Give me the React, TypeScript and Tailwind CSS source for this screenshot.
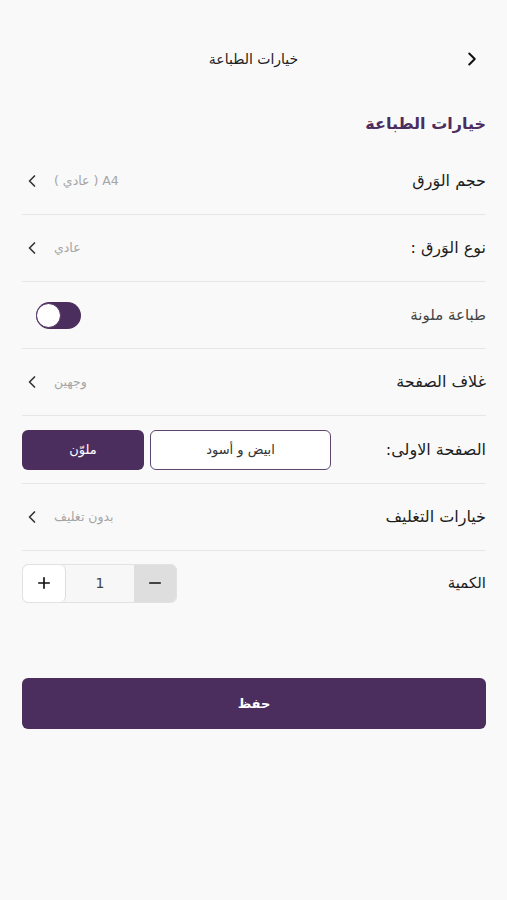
import { ChevronLeft, ChevronRight, Plus, Minus } from 'lucide-react';

const font = "font-['DejaVu_Sans',sans-serif]";

function NavRow({ label, value }: { label: string; value: string }) {
  return (
    <div className="flex items-center justify-between h-[67px] border-b border-[#e6e6e6]">
      <span className="text-[16px] text-[#1d1d1d]">{label}</span>
      <div className="flex items-center gap-[12px] text-[#a5a5a5]">
        <span className="text-[12.5px]">{value}</span>
        <ChevronLeft className="w-[20px] h-[20px] text-[#333]" strokeWidth={2} />
      </div>
    </div>
  );
}

export default function App() {
  return (
    <div dir="rtl" className={`${font} w-[507px] h-[900px] bg-[#f9f9f9] flex flex-col`}>
      {/* Header */}
      <div className="relative flex items-center justify-center h-[60px] mt-[29px] text-[14px] text-[#222]">
        <span>خيارات الطباعة</span>
        <ChevronRight className="absolute right-[24px] w-[22px] h-[22px] text-[#111]" strokeWidth={2.2} />
      </div>

      <div className="pr-[21px] pl-[22px]">
        <h2 className="text-[16px] font-bold text-[#4b2d5e] mt-[23px] mb-[12px]">خيارات الطباعة</h2>

        <NavRow label="حجم الوَرق" value="A4 ( عادي )" />
        <NavRow label="نوع الوَرق :" value="عادي" />

        <div className="flex items-center justify-between h-[67px] border-b border-[#e6e6e6]">
          <span className="text-[15px] text-[#444]">طباعة ملونة</span>
          <div className="w-[45px] h-[27px] rounded-full bg-[#4b2d5e] flex items-center justify-end ml-[14px]">
            <div className="w-[25px] h-[25px] rounded-full bg-white border border-[#4b2d5e]" />
          </div>
        </div>

        <NavRow label="غلاف الصفحة" value="وجهين" />

        <div className="flex items-center justify-between h-[68px] border-b border-[#e6e6e6]">
          <span className="text-[16px] text-[#1d1d1d]">الصفحة الاولى:</span>
          <div className="flex items-center gap-[6px]">
            <button className="w-[181px] h-[40px] rounded-[6px] border-[1.5px] border-[#5e4670] bg-white text-[13px] text-[#333]">
              ابيض و أسود
            </button>
            <button className="w-[122px] h-[40px] rounded-[6px] bg-[#4b2d5e] text-[13px] text-white">
              ملوّن
            </button>
          </div>
        </div>

        <NavRow label="خيارات التغليف" value="بدون تغليف" />

        <div className="flex items-center justify-between h-[64px]">
          <span className="text-[15px] text-[#1d1d1d]">الكمية</span>
          <div dir="ltr" className="flex h-[39px] w-[155px] rounded-[6px] border border-[#e2e2e2] overflow-hidden bg-[#f3f3f3]">
            <div className="w-[43px] flex items-center justify-center bg-white border-r border-[#ddd] rounded-[6px]">
              <Plus className="w-[18px] h-[18px] text-[#111]" strokeWidth={2.2} />
            </div>
            <div className="flex-1 flex items-center justify-center text-[14px] text-[#444] bg-[#f7f7f7]">1</div>
            <div className="w-[42px] flex items-center justify-center bg-[#dedede]">
              <Minus className="w-[18px] h-[18px] text-[#111]" strokeWidth={2.2} />
            </div>
          </div>
        </div>

        <button className="w-full h-[51px] mt-[63px] rounded-[6px] bg-[#4b2d5e] text-white text-[13px] font-bold">
          حفظ
        </button>
      </div>
    </div>
  );
}
